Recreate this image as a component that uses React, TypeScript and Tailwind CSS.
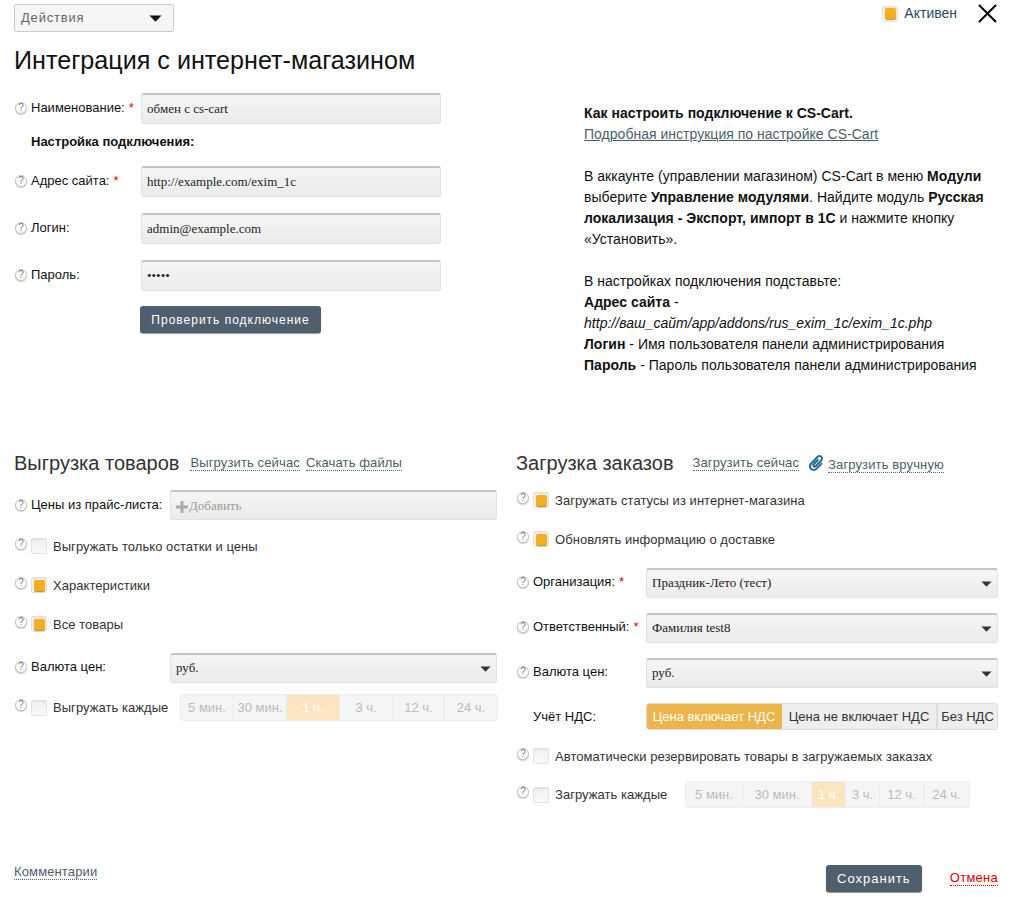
import { FaPaperclip } from 'react-icons/fa';

const sans = "font-['Liberation_Sans',Arial,sans-serif]";
const serif = "font-['Liberation_Serif','Times_New_Roman',serif]";

function Help() {
  return (
    <span className="flex h-3 w-3 shrink-0 items-center justify-center rounded-full border border-[#c4c4c4] bg-white text-[10px] leading-none text-[#777] shadow-[0_1px_1px_#ccc]">
      ?
    </span>
  );
}

function Caret({ className = 'fill-[#333]', w = 13, h = 7 }: { className?: string; w?: number; h?: number }) {
  return (
    <svg width={w} height={h} viewBox="0 0 13 7" className={className}>
      <path d="M0.5 0.5h12L7 6.3a.8.8 0 0 1-1 0z" />
    </svg>
  );
}

function Check({ on }: { on?: boolean }) {
  return (
    <span className="flex h-4 w-4 shrink-0 items-center justify-center rounded-[2px] border border-[#e2e2e2] bg-linear-to-b from-[#f0f0f0] to-[#fafafa] shadow-[inset_0_1px_1px_#e2e2e2]">
      {on && <span className="h-[11px] w-[11px] rounded-[2px] bg-[#f6ae1d] shadow-[0_1px_1px_#b98a2a]"></span>}
    </span>
  );
}

const fieldClass =
  'flex items-center justify-between rounded-[3px] border border-[#e2e2e2] border-t-2 border-t-[#c4c4c4] bg-linear-to-b from-[#f6f6f6] to-[#ebebeb] pl-[5px] pr-[5px] text-[13px] text-[#222] ' +
  serif;

function Field({ label, req, value }: { label: string; req?: boolean; value: string }) {
  return (
    <div className="flex items-start">
      <div className="flex w-[127px] items-center gap-1 pt-[7px] pl-[1px]">
        <Help />
        <span className="text-[13px] leading-[15px] text-[#111]">
          {label}
          {req && <span className="ml-1 text-[#d00]">*</span>}
        </span>
      </div>
      <div className={`${fieldClass} h-[31px] w-[300px]`}>{value}</div>
    </div>
  );
}

function SelectField({ label, req, value, labelW, width }: { label: string; req?: boolean; value: string; labelW: string; width: string }) {
  return (
    <div className="flex items-start">
      <div className={`${labelW} flex items-center gap-1 pt-[6px] pl-[1px]`}>
        <Help />
        <span className="text-[13px] leading-[15px] text-[#111]">
          {label}
          {req && <span className="ml-1 text-[#d00]">*</span>}
        </span>
      </div>
      <div className={`${fieldClass} ${width} h-[30px]`}>
        <span className="pb-[2px]">{value}</span>
        <Caret className="fill-[#333]" w={11} h={6} />
      </div>
    </div>
  );
}

function CheckRow({ on, label }: { on?: boolean; label: string }) {
  return (
    <div className="flex items-center pl-[1px]">
      <span className="-mt-[5px] mr-1">
        <Help />
      </span>
      <Check on={on} />
      <span className="ml-[6px] text-[13px] leading-[15px] tracking-[0.05px] text-[#333]">{label}</span>
    </div>
  );
}

function Periods({ items, active }: { items: [string, string][]; active: number }) {
  return (
    <div className="flex h-[27px] rounded-[3px] border border-[#eee] bg-[#f5f5f5] text-[13px] text-[#bbb]">
      {items.map(([text, w], i) => (
        <span
          key={text}
          className={`flex items-center justify-center border-r border-[#eee] last:border-r-0 ${w} ${i === active ? 'bg-[#fae5be] text-white' : ''}`}
        >
          {text}
        </span>
      ))}
    </div>
  );
}

function DotLink({ children, className = '' }: { children: string; className?: string }) {
  return <span className={`border-b border-dotted border-[#4b6a80] text-[13px] leading-[15px] tracking-[0.13px] text-[#4d5f6b] ${className}`}>{children}</span>;
}

export default function App() {
  return (
    <div className={`${sans} h-[897px] w-[1010px] overflow-hidden bg-white pt-[2px] pr-[12px] pl-[14px] text-[#111]`}>
      <div className="flex items-start justify-between">
        <div className="mt-[2px] flex h-[28px] w-[160px] items-center justify-between rounded-[2px] border border-[#ccc] bg-[#f6f6f6] pr-[11px] pl-[6px] text-[13px] tracking-[0.8px] text-[#666]">
          Действия
          <Caret className="fill-[#111]" />
        </div>
        <div className="flex items-center pt-[1px]">
          <Check on />
          <span className="ml-[6px] text-[14px] text-[#2d4a63]">Активен</span>
          <svg width="20" height="20" viewBox="0 0 20 20" className="ml-[21px] stroke-black stroke-2">
            <path d="M1 1 18 18M18 1 1 18" />
          </svg>
        </div>
      </div>

      <h1 className="mt-[10px] text-[25.15px] leading-[36px] text-[#111]">Интеграция с интернет-магазином</h1>

      <div className="mt-[15px] flex h-[322px]">
        <div className="w-[570px]">
          <Field label="Наименование:" req value="обмен с cs-cart" />
          <div className="mt-[9px] mb-[16px] ml-[17px] text-[13px] leading-[17px] font-bold">Настройка подключения:</div>
          <div className="flex flex-col gap-4">
            <Field label="Адрес сайта:" req value="http://example.com/exim_1c" />
            <Field label="Логин:" value="admin@example.com" />
            <Field label="Пароль:" value="•••••" />
          </div>
          <div className="mt-[15px] ml-[126px] flex h-[27px] w-[181px] items-center justify-center rounded-[3px] bg-[#4e606d] text-[12px] tracking-[1px] text-white shadow-[0_1px_1px_#999]">
            Проверить подключение
          </div>
        </div>
        <div className="pt-[10px] text-[14px] leading-[21px] tracking-[0.02px] text-[#111]">
          <div className="font-bold">Как настроить подключение к CS-Cart.</div>
          <div className="text-[#4d5f6b] underline">Подробная инструкция по настройке CS-Cart</div>
          <div className="mt-[21px]">
            В аккаунте (управлении магазином) CS-Cart в меню <b>Модули</b>
            <br />
            выберите <b>Управление модулями</b>. Найдите модуль <b>Русская</b>
            <br />
            <b>локализация - Экспорт, импорт в 1С</b> и нажмите кнопку
            <br />
            «Установить».
          </div>
          <div className="mt-[21px]">
            В настройках подключения подставьте:
            <br />
            <b>Адрес сайта</b> -
            <br />
            <i>http://ваш_сайт/app/addons/rus_exim_1c/exim_1c.php</i>
            <br />
            <b>Логин</b> - Имя пользователя панели администрирования
            <br />
            <b>Пароль</b> - Пароль пользователя панели администрирования
          </div>
        </div>
      </div>

      <div className="mt-[36px] flex">
        <div className="w-[502px]">
          <div className="flex h-[24px] items-center">
            <h2 className="text-[20px] leading-[24px] text-[#333]">Выгрузка товаров</h2>
            <DotLink className="ml-[11px]">Выгрузить сейчас</DotLink>
            <DotLink className="ml-[6px]">Скачать файлы</DotLink>
          </div>
          <div className="mt-[15px] flex items-start">
            <div className="flex w-[156px] items-center gap-1 pt-[7px] pl-[1px]">
              <Help />
              <span className="text-[13px] leading-[15px] text-[#111]">Цены из прайс-листа:</span>
            </div>
            <div className={`${fieldClass} h-[30px] w-[327px] !justify-start text-[#a09a90]`}>
              <svg width="12" height="12" viewBox="0 0 12 12" className="mt-[2px] mr-px fill-[#aaa]">
                <path d="M4.5 0h3v4.500h4.500v3H7.500v4.500h-3V7.500H0v-3h4.500z" />
              </svg>
              Добавить
            </div>
          </div>
          <div className="mt-[18px] flex flex-col gap-[23px]">
            <CheckRow label="Выгружать только остатки и цены" />
            <CheckRow on label="Характеристики" />
            <CheckRow on label="Все товары" />
          </div>
          <div className="mt-[21px]">
            <SelectField label="Валюта цен:" value="руб." labelW="w-[156px]" width="w-[327px]" />
          </div>
          <div className="mt-[11px] flex items-center">
            <div className="w-[166px]">
              <CheckRow label="Выгружать каждые" />
            </div>
            <Periods
              active={2}
              items={[
                ['5 мин.', 'w-[53px]'],
                ['30 мин.', 'w-[53px]'],
                ['1 ч.', 'w-[53px]'],
                ['3 ч.', 'w-[53px]'],
                ['12 ч.', 'w-[52px]'],
                ['24 ч.', 'w-[52px]'],
              ]}
            />
          </div>
        </div>

        <div className="w-[482px]">
          <div className="flex h-[24px] items-center">
            <h2 className="text-[20px] leading-[24px] text-[#333]">Загрузка заказов</h2>
            <DotLink className="ml-[19px]">Загрузить сейчас</DotLink>
            <FaPaperclip className="ml-[9px] text-[16px] text-[#2a6a96]" />
            <DotLink className="mt-[3px] ml-[4px]">Загрузить вручную</DotLink>
          </div>
          <div className="mt-[17px] flex flex-col gap-[23px]">
            <CheckRow on label="Загружать статусы из интернет-магазина" />
            <CheckRow on label="Обновлять информацию о доставке" />
          </div>
          <div className="mt-[21px] flex flex-col gap-[15px]">
            <SelectField label="Организация:" req value="Праздник-Лето (тест)" labelW="w-[130px]" width="w-[352px]" />
            <SelectField label="Ответственный:" req value="Фамилия test8" labelW="w-[130px]" width="w-[352px]" />
            <SelectField label="Валюта цен:" value="руб." labelW="w-[130px]" width="w-[352px]" />
          </div>
          <div className="mt-[15px] flex items-center">
            <span className="w-[130px] pl-[17px] text-[13px] text-[#111]">Учёт НДС:</span>
            <div className="flex h-[27px] w-[352px] overflow-hidden rounded-[3px] border border-[#ddd] bg-[#eee] text-[13px] text-[#333]">
              <span className="-my-px -ml-px flex w-[136px] items-center justify-center bg-[#edb44a] text-white">Цена включает НДС</span>
              <span className="flex w-[156px] items-center justify-center border-r-2 border-[#ddd]">Цена не включает НДС</span>
              <span className="flex flex-1 items-center justify-center">Без НДС</span>
            </div>
          </div>
          <div className="mt-[18px]">
            <CheckRow label="Автоматически резервировать товары в загружаемых заказах" />
          </div>
          <div className="mt-[17px] flex items-center">
            <div className="w-[169px]">
              <CheckRow label="Загружать каждые" />
            </div>
            <Periods
              active={2}
              items={[
                ['5 мин.', 'w-[57px]'],
                ['30 мин.', 'w-[69px]'],
                ['1 ч.', 'w-[34px]'],
                ['3 ч.', 'w-[34px]'],
                ['12 ч.', 'w-[44px]'],
                ['24 ч.', 'w-[45px]'],
              ]}
            />
          </div>
        </div>
      </div>

      <div className="mt-[57px] flex items-start">
        <DotLink className="-mt-px">Комментарии</DotLink>
        <div className="mr-[28px] ml-auto flex h-[27px] w-[96px] items-center justify-center rounded-[3px] bg-[#4e606d] text-[13px] tracking-[1px] text-white shadow-[0_1px_1px_#999]">
          Сохранить
        </div>
        <span className="mt-[5px] border-b border-dotted border-[#d00] text-[13px] leading-[15px] tracking-[0.25px] text-[#d00]">Отмена</span>
      </div>
    </div>
  );
}
